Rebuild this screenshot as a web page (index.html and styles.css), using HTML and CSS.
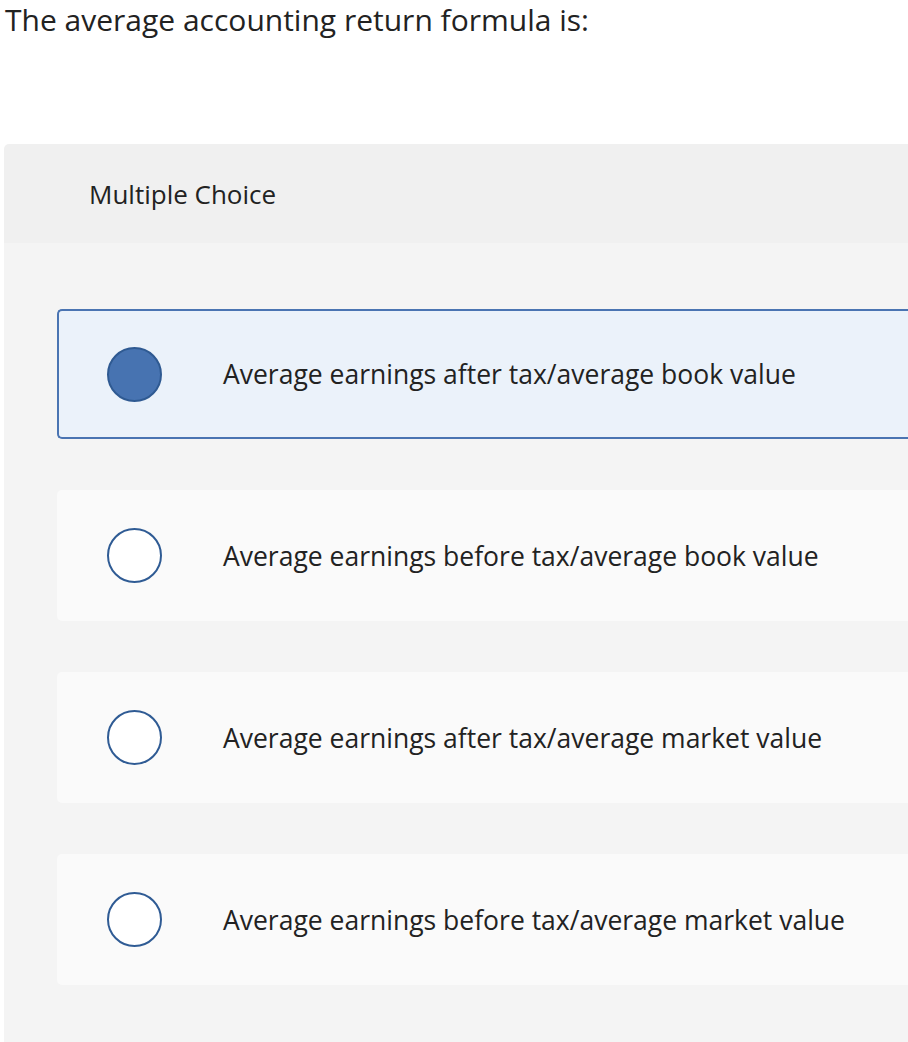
FILE: index.html
```html
<!DOCTYPE html>
<html>
<head>
<meta charset="utf-8">
<link rel="stylesheet" href="styles.css">
</head>
<body>
<h1 class="question">The average accounting return formula is:</h1>
<div class="card">
  <div class="card-header">Multiple Choice</div>
  <div class="card-body">
    <div class="option selected"><span class="radio"></span><span class="label">Average earnings after tax/average book value</span></div>
    <div class="option"><span class="radio"></span><span class="label">Average earnings before tax/average book value</span></div>
    <div class="option"><span class="radio"></span><span class="label">Average earnings after tax/average market value</span></div>
    <div class="option"><span class="radio"></span><span class="label">Average earnings before tax/average market value</span></div>
  </div>
</div>
</body>
</html>
```
FILE: styles.css
```css
html, body {
  margin: 0;
  padding: 0;
  background: #ffffff;
}
body {
  font-family: "Open Sans", "Noto Sans", sans-serif;
  color: #222222;
  height: 1042px;
  overflow: hidden;
}
.question {
  margin: 0;
  padding: 1px 0 0 5px;
  font-size: 30px;
  font-weight: 400;
  line-height: 38px;
  color: #222222;
}
.card {
  margin: 105px 0 0 4px;
  border-radius: 5px 0 0 0;
  overflow: hidden;
}
.card-header {
  background: #f0f0f0;
  height: 99px;
  box-sizing: border-box;
  padding-left: 85px;
  display: flex;
  align-items: center;
  font-size: 26px;
  color: #222222;
}
.card-body {
  background: #f4f4f4;
  padding: 66px 0 80px 53px;
  display: flex;
  flex-direction: column;
  gap: 51px;
}
.option {
  height: 131px;
  box-sizing: border-box;
  background: #fafafa;
  border-radius: 5px 0 0 5px;
  display: flex;
  align-items: center;
  padding-left: 50px;
}
.option.selected {
  background: #ebf2fa;
  border: 2px solid #4a74b2;
  border-right: none;
  padding-left: 48px;
  height: 130px;
}
.radio {
  width: 55px;
  height: 55px;
  box-sizing: border-box;
  border-radius: 50%;
  border: 2px solid #2f5b94;
  background: #ffffff;
  flex: none;
}
.selected .radio {
  background: #4773b1;
  border-color: #2f5a92;
}
.label {
  margin-left: 61px;
  font-size: 26.5px;
  color: #222222;
}
```
